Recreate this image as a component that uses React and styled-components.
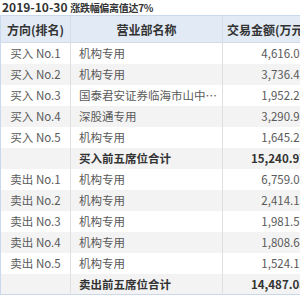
import styled, { createGlobalStyle } from "styled-components";

const Global = createGlobalStyle`
  html, body {
    margin: 0;
    padding: 0;
    background: #fff;
    overflow: hidden;
  }
  body {
    font-family: "Noto Sans CJK SC", "Liberation Sans", sans-serif;
  }
`;

const rows = [
  { dir: "买入 No.1", name: "机构专用", amount: "4,616.05" },
  { dir: "买入 No.2", name: "机构专用", amount: "3,736.42" },
  { dir: "买入 No.3", name: "国泰君安证券临海市山中路证券营业部", amount: "1,952.24" },
  { dir: "买入 No.4", name: "深股通专用", amount: "3,290.93" },
  { dir: "买入 No.5", name: "机构专用", amount: "1,645.23" },
  { dir: "", name: "买入前五席位合计", amount: "15,240.97", total: true },
  { dir: "卖出 No.1", name: "机构专用", amount: "6,759.01" },
  { dir: "卖出 No.2", name: "机构专用", amount: "2,414.13" },
  { dir: "卖出 No.3", name: "机构专用", amount: "1,981.52" },
  { dir: "卖出 No.4", name: "机构专用", amount: "1,808.64" },
  { dir: "卖出 No.5", name: "机构专用", amount: "1,524.17" },
  { dir: "", name: "卖出前五席位合计", amount: "14,487.08", total: true },
];

const Wrap = styled.div`
  width: 300px;
  height: 300px;
  overflow: hidden;
`;

const Title = styled.div`
  height: 14px;
  line-height: 14px;
  padding-left: 2px;
  font-size: 12px;
  font-weight: 700;
  color: #333;
  white-space: nowrap;
`;

const TitleNote = styled.span`
  font-size: 10px;
  letter-spacing: -0.3px;
`;

const Table = styled.table`
  width: 312px;
  table-layout: fixed;
  border-collapse: collapse;
  margin-top: 1px;
  border: 1px solid #c9d8ea;
  font-size: 11.5px;
  color: #555;
`;

const Head = styled.th`
  height: 26px;
  padding: 0;
  background: #e1eaf5;
  border-left: 1px solid #d4dde8;
  border-bottom: 1px solid #d0dcea;
  font-size: 12px;
  font-weight: 700;
  color: #333;
  text-align: center;
  white-space: nowrap;
  &:first-child { border-left: none; }
`;

const Row = styled.tr`
  height: 21px;
  background: ${(p) => (p.$striped ? "#f3f3f3" : "#fff")};
`;

const Cell = styled.td`
  padding: ${(p) =>
    p.$align === "left" ? "0 2px 0 8px" : p.$align === "right" ? "0 6px 0 0" : "0"};
  border-left: 1px solid #dfdfdf;
  text-align: ${(p) => p.$align || "center"};
  font-weight: ${(p) => (p.$bold ? 700 : 400)};
  color: ${(p) => (p.$bold ? "#333" : "#5a5a5a")};
  white-space: nowrap;
  overflow: hidden;
  text-overflow: ellipsis;
  &:first-child { border-left: none; }
`;

export default function App() {
  return (
    <Wrap>
      <Global />
      <Title>
        2019-10-30 <TitleNote>涨跌幅偏离值达7%</TitleNote>
      </Title>
      <Table>
        <colgroup>
          <col style={{ width: 70 }} />
          <col style={{ width: 152 }} />
          <col style={{ width: 90 }} />
        </colgroup>
        <thead>
          <tr>
            <Head>方向(排名)</Head>
            <Head>营业部名称</Head>
            <Head>交易金额(万元)</Head>
          </tr>
        </thead>
        <tbody>
          {rows.map((r, i) => (
            <Row key={i} $striped={i % 2 === 1}>
              <Cell>{r.dir}</Cell>
              <Cell $align="left" $bold={r.total}>{r.name}</Cell>
              <Cell $align="right" $bold={r.total}>{r.amount}</Cell>
            </Row>
          ))}
        </tbody>
      </Table>
    </Wrap>
  );
}
